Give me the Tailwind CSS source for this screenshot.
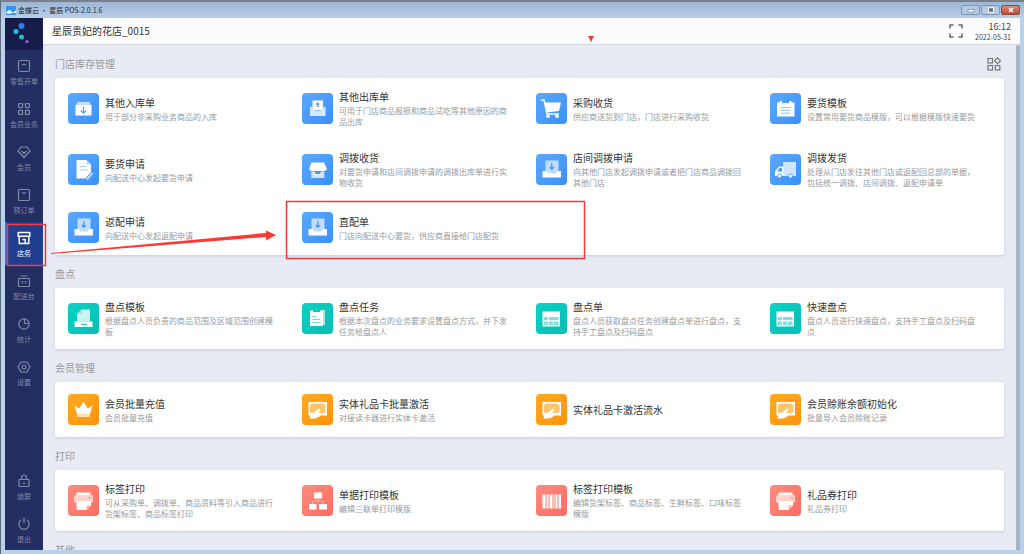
<!DOCTYPE html>
<html lang="zh-CN">
<head>
<meta charset="utf-8">
<title>金蝶云 · 星辰 POS</title>
<script src="https://cdn.jsdelivr.net/npm/@tailwindcss/browser@4"></script>
</head>
<body class="font-['Noto_Sans_CJK_SC','Noto_Sans',sans-serif]">
<svg class="hidden">
  <defs>
    <symbol id="boxdown" viewBox="0 0 31 31"><path fill="#c4deff" d="M9.500 9h12l1.500 3.500H8z"/><path fill="#fff" d="M7.500 12h16v10.500h-16z"/><path d="M15.500 14v6M12.800 17.500l2.700 2.700 2.700-2.700" fill="none" stroke="#4a9bff" stroke-width="1.100"/></symbol>
    <symbol id="envelope" viewBox="0 0 31 31"><path fill="#fff" d="M10.500 7.500h10.500V17H10.500z"/><path fill="#d6e8ff" d="M8 13.500l2.500 1 2.500 3h5.500l2.500-3 2.500-1V23H8z"/><path fill="#4a9bff" d="M15.800 9l2.200 2.500h-1.500V14H15v-2.500h-1.500z"/></symbol>
    <symbol id="cart" viewBox="0 0 31 31"><path d="M5 7h3l3 14h12" fill="none" stroke="#fff" stroke-width="1.400"/><path fill="#fff" d="M8.500 9.500H25l-2 8.500-12.500 1.500z"/><circle cx="12" cy="23.300" r="1.800" fill="#fff"/><circle cx="21" cy="23.300" r="1.800" fill="#fff"/></symbol>
    <symbol id="notepad" viewBox="0 0 31 31"><path fill="#fff" d="M7 9.500h2.500V8h2.500v2h7V8h2.500v1.500H24.500v14H7z"/><path d="M11 14.500h9.500M11 17.300h9.500M11 20.200h9.500" stroke="#8fc1ff"/></symbol>
    <symbol id="request" viewBox="0 0 31 31"><path fill="#fff" d="M8.500 6h10l4.500 4.500V18l-6 7-1.500-1-1.500 1-1.500-1-1.500 1-1.500-1-1 1z"/><path fill="#b9d8ff" d="M18.500 6l4.500 4.500h-4.500z"/><path d="M11.500 12.500h7M11.500 16h8.500" stroke="#a5cdff" stroke-width="1.100"/><path d="M24.500 19l-5.500 6.500" stroke="#cfe4ff" stroke-width="1.900"/></symbol>
    <symbol id="shop" viewBox="0 0 31 31"><path fill="#fff" d="M9.500 8.500h12.500l3 6.500-2 2h-14l-2-2z"/><path fill="#cfe4ff" d="M9.300 17.500h3v3h7v-3h3v6.500h-13z"/><path d="M12.500 18v2.500h6.500V18" fill="none" stroke="#fff"/></symbol>
    <symbol id="tray" viewBox="0 0 31 31"><path fill="#c2dcff" d="M9.500 6.500h13V20h-13z"/><path d="M15.800 9v6M13.800 13l2 2.300 2-2.300" fill="none" stroke="#3f93fb" stroke-width="1.200"/><path fill="#fff" d="M6.500 17h4l1.500 2.500h7.500l1.500-2.500h4v6.500h-18.500z"/></symbol>
    <symbol id="truck" viewBox="0 0 31 31"><path fill="#cfe4ff" d="M13 8h13v14H13z"/><path fill="#fff" d="M9 12.500h4.500V22H5v-4.500z"/><path fill="#4a9bff" d="M9.500 14h2.500v3.500H7.300z"/><circle cx="9.500" cy="22" r="2" fill="#fff" stroke="#4a9bff" stroke-width=".8"/><circle cx="20.500" cy="22" r="2" fill="#fff" stroke="#4a9bff" stroke-width=".8"/></symbol>
    <symbol id="register" viewBox="0 0 31 31"><path fill="#c9f4f0" d="M13.500 6.500H22v12H9v-7.500z"/><path fill="#8fe6df" d="M9 11l4.500-4.500V11z"/><path fill="#fff" d="M6.500 18.500h18V24h-18z"/><path d="M13 21.300h6" stroke="#0dc9be" stroke-width="1.100"/></symbol>
    <symbol id="clipboard" viewBox="0 0 31 31"><path fill="#a0ebe5" d="M19 7h4v15h-4z"/><path fill="#fff" d="M8 7.500h3V9h7V7.500h3V23H8z"/><path d="M10.500 13.500h4M10.500 16.500h8M10.500 19.500h8" stroke="#71ddd5"/></symbol>
    <symbol id="sheet" viewBox="0 0 31 31"><path fill="#fff" d="M6.500 8.500H24V23.500H6.500z"/><path fill="#7ee2db" d="M8 14h4v3.300H8zM13 14h9.500v3.300H13zM8 18.500h4V22H8zM13 18.500h4V22h-4zM18 18.500h4.500V22H18z"/></symbol>
    <symbol id="crown" viewBox="0 0 31 31"><path fill="#fff" d="M6.500 11.500l4.700 3 4.300-7 4.300 7 4.700-3-2.500 8.700H9z"/><path fill="#ffe1b0" d="M9 20.200h13V23H9z"/></symbol>
    <symbol id="giftcard" viewBox="0 0 31 31"><path fill="#fff" d="M6.500 8h18.500v13.500H6.500z"/><path fill="#ffc56b" d="M9.500 9.500h12l2 2v6l-2 2h-12l-1.500-2v-6z"/><path fill="#fff" d="M7.500 24.500l1-4.500 5-2.500 3.500-3 1.500 1-2 3.500h4l-3 3.500-4 2z"/></symbol>
    <symbol id="printer" viewBox="0 0 31 31"><path fill="#fff" d="M8.500 7.500h14v3h-14z"/><path fill="#ffd2cd" d="M8 10h15.500q1.500 0 1.500 1.500v6H6v-5.500q0-2 2-2z"/><path d="M20.500 12.800h2.500" stroke="#ff7c70"/><path fill="#fff" d="M8.500 16H23v4.500L18.500 25h-10z"/><path fill="#ffb0a8" d="M23 20.500L18.500 25v-4.500z"/></symbol>
    <symbol id="tree" viewBox="0 0 31 31"><path fill="#fff" d="M12 7.500h8v6h-8zM7 19h7.500v5.500H7zM17 19h8v5.500h-8z"/><path d="M16 13v3M10.500 19v-2.700h10.500V19" fill="none" stroke="#ffb8b0"/></symbol>
    <symbol id="barcode" viewBox="0 0 31 31"><path fill="#fff" d="M6.500 9.500h3v14h-3zM10.500 9.500h2v14h-2zM13.500 9.500h3v14h-3zM17.500 9.500h1v14h-1zM19.500 9.500h2v14h-2zM22.500 9.500h2.500v14h-2.500z"/></symbol>
  </defs>
</svg>

<div class="relative flex h-screen flex-col overflow-hidden border-t-2 border-l border-t-[#7b8088] border-l-[#5d6c7c] bg-[#b9d1ea]">
  <div class="flex h-4 shrink-0 items-center bg-linear-to-b from-[#9db7d6] to-[#b7cee9] pr-1 pl-[5px]">
    <svg class="mr-[2px] h-[9px] w-[10px]" viewBox="0 0 10 9"><rect width="10" height="9" fill="#2f94f5"/><path d="M0 7Q3 2 5 5T10 4V7Q6 6 4 8Z" fill="#fff"/></svg>
    <span class="flex-1 text-[7px] leading-none text-[#1c2733]">金蝶云 · 星辰 POS-2.0.1.6</span>
    <div class="flex gap-px">
      <button aria-label="最小化" class="flex h-[10px] w-[19px] items-center justify-center rounded-xs border border-[#7e95b2] bg-[#b4c9e2]"><svg class="h-[6px] w-2" viewBox="0 0 8 6"><rect x="1" y="2.500" width="6" height="2.500" fill="#fff" stroke="#6b7685" stroke-width=".6"/></svg></button>
      <button aria-label="最大化" class="flex h-[10px] w-[19px] items-center justify-center rounded-xs border border-[#7e95b2] bg-[#b4c9e2]"><svg class="h-[6px] w-2" viewBox="0 0 8 6"><rect x="1.500" y=".8" width="5" height="4.400" fill="#5f6b7a" stroke="#fff"/></svg></button>
      <button aria-label="关闭" class="flex h-[10px] w-[19px] items-center justify-center rounded-xs border border-[#8d4a42] bg-linear-to-b from-[#dd8d7c] to-[#bd4630]"><svg class="h-[6px] w-2" viewBox="0 0 8 6"><path d="M2 1l4 4M6 1L2 5" stroke="#fff" stroke-width="1.500"/></svg></button>
    </div>
  </div>

  <div class="flex min-h-0 flex-1 pr-1 pb-[4px] pl-1">
    <nav class="flex w-[38px] shrink-0 flex-col bg-[#232e63] text-[7px] leading-[10px] text-[#8389a5]">
      <div class="flex h-8 shrink-0 justify-center bg-[#161d48]">
        <svg class="h-8 w-[38px]" viewBox="0 0 38 32"><circle cx="16.500" cy="8" r="3" fill="#2d7ff0"/><circle cx="11" cy="13.500" r="2.500" fill="#12c4f2"/><circle cx="16.500" cy="19" r="2.500" fill="#1cc3b4"/><circle cx="22" cy="23.500" r="1.600" fill="#9a62e0"/></svg>
      </div>
      <a href="#" class="flex h-[43px] flex-col items-center gap-[3px] pt-[9px]"><svg class="size-[14px]" viewBox="0 0 14 14" fill="none" stroke="currentColor" stroke-width="1.200"><rect x="1.500" y="1.500" width="11" height="11" rx="1.500"/><path d="M5 5.500h4"/></svg>零售开单</a>
      <a href="#" class="flex h-[43px] flex-col items-center gap-[3px] pt-[9px]"><svg class="size-[14px]" viewBox="0 0 14 14" fill="none" stroke="currentColor" stroke-width="1.200"><rect x="1.600" y="1.600" width="4" height="4" rx=".5"/><rect x="8.400" y="1.600" width="4" height="4" rx=".5"/><rect x="1.600" y="8.400" width="4" height="4" rx=".5"/><rect x="8.400" y="8.400" width="4" height="4" rx=".5"/></svg>会员业务</a>
      <a href="#" class="flex h-[43px] flex-col items-center gap-[3px] pt-[9px]"><svg class="size-[14px]" viewBox="0 0 14 14" fill="none" stroke="currentColor" stroke-width="1.200" stroke-linejoin="round"><path d="M4 2h6l3 4-6 6.500L1 6zM4.500 6L7 8.500 9.500 6"/></svg>会员</a>
      <a href="#" class="flex h-[43px] flex-col items-center gap-[3px] pt-[9px]"><svg class="size-[14px]" viewBox="0 0 14 14" fill="none" stroke="currentColor" stroke-width="1.200"><rect x="1.500" y="1.500" width="11" height="11" rx="1"/><path d="M5 5h4"/></svg>预订单</a>
      <a href="#" aria-current="page" class="flex h-[43px] flex-col items-center gap-[3px] border-l-2 border-[#2a6df0] bg-[#20408f] pt-[9px] pr-[2px] text-white"><svg class="size-[14px]" viewBox="0 0 14 14" fill="none" stroke="currentColor" stroke-width="1.400" stroke-linejoin="round"><path d="M1.200 1.500h11.600v3.800H1.200zM2.200 5.500v7h9.600v-7M8.200 12.500V8.500H5.500"/></svg>店务</a>
      <a href="#" class="flex h-[43px] flex-col items-center gap-[3px] pt-[9px]"><svg class="size-[14px]" viewBox="0 0 14 14" fill="none" stroke="currentColor" stroke-width="1.200"><rect x="1.500" y="4.500" width="11" height="8" rx=".5"/><path d="M3.500 2h7M5.500 7v2.500M8.500 7v2.500"/></svg>配送台</a>
      <a href="#" class="flex h-[43px] flex-col items-center gap-[3px] pt-[9px]"><svg class="size-[14px]" viewBox="0 0 14 14" fill="none" stroke="currentColor" stroke-width="1.200"><circle cx="7" cy="7" r="5.200"/><path d="M7.500 2v4.500H12"/></svg>统计</a>
      <a href="#" class="flex h-[43px] flex-col items-center gap-[3px] pt-[9px]"><svg class="size-[14px]" viewBox="0 0 14 14" fill="none" stroke="currentColor" stroke-width="1.200" stroke-linejoin="round"><path d="M4 2h6l3 5-3 5H4L1 7z"/><circle cx="7" cy="7" r="2"/></svg>设置</a>
      <a href="#" class="mt-auto flex h-[43px] flex-col items-center gap-[3px] pt-[10px]"><svg class="size-[14px]" viewBox="0 0 14 14" fill="none" stroke="currentColor" stroke-width="1.200"><rect x="2" y="5.500" width="10" height="7" rx=".5"/><path d="M4.500 5.500V3.500a2.500 2.500 0 0 1 5 0v2M7 8v2.500"/></svg>锁屏</a>
      <a href="#" class="flex h-[43px] flex-col items-center gap-[3px] pt-[10px]"><svg class="size-[14px]" viewBox="0 0 14 14" fill="none" stroke="currentColor" stroke-width="1.200"><path d="M4 3a5.200 5.200 0 1 0 6 0M7 1v5"/></svg>退出</a>
    </nav>

    <div class="flex min-w-0 flex-1 flex-col bg-[#e8ebf4]">
      <header class="flex h-[27px] shrink-0 items-center border-b border-[#d5d8df] bg-[#fcfcfd] pr-[9px] pl-[9px]">
        <h1 class="flex-1 text-[10px] leading-none text-[#333]">星辰贵妃的花店_0015</h1>
        <button aria-label="全屏" class="mr-[12px] text-[#666]"><svg class="size-[14px]" viewBox="0 0 14 14" fill="none" stroke="currentColor" stroke-width="1.500"><path d="M1 4.500V1h3.500M9.500 1H13v3.500M13 9.500V13H9.500M4.500 13H1V9.500"/></svg></button>
        <div class="text-right text-[#444]"><div class="text-[9px] leading-[11px]">16:12</div><div class="text-[7px] leading-[10px]">2022-05-31</div></div>
      </header>

      <main class="flex min-h-0 flex-1 overflow-hidden">
        <div class="min-w-0 flex-1 pr-3 pl-3" id="sections"></div>
        <div class="w-1 shrink-0 rounded-t-sm bg-[#a9b4c3]"></div>
      </main>
    </div>
  </div>

  <svg class="pointer-events-none absolute -top-[2px] -left-px h-[300px] w-[620px]" viewBox="0 0 620 300" fill="none" stroke="#f23a3a" aria-hidden="true">
    <path d="M588 36h6l-3 6z" fill="#f23a3a" stroke="none"/>
    <rect x="7.500" y="224.500" width="38" height="41" stroke-width="1.500"/>
    <rect x="286.500" y="201.500" width="298" height="57" stroke-width="1.500"/>
    <path d="M51 253L266 233V230.500L276 235 266 240.500V237L51 254z" fill="#fb3a36" stroke="none"/>
  </svg>
</div>

<template id="section-tpl">
  <section>
    <div class="flex h-[33px] items-center justify-between pt-[4px] pr-[3px]"><h2 class="text-[10px] leading-none text-[#999]"></h2></div>
    <div class="grid grid-cols-4 rounded-xs bg-white pl-[13px] shadow-sm shadow-[#c9cfdf]"></div>
  </section>
</template>
<template id="card-tpl">
  <a href="#" class="flex items-center gap-[6px] py-3">
    <span class="size-[31px] shrink-0 rounded-[4px] bg-linear-to-br"><svg class="size-[31px]" viewBox="0 0 31 31"><use/></svg></span>
    <span class="flex w-[174px] flex-col gap-[2px]"><span class="text-[10px] leading-[13px] text-[#333]"></span><span class="text-[8px] leading-[11px] text-[#999]"></span></span>
  </a>
</template>
<template id="manage-tpl"><button aria-label="管理" class="text-[#777]"><svg class="size-[14px]" viewBox="0 0 14 14" fill="none" stroke="currentColor" stroke-width="1.200"><rect x="1" y="1.500" width="4.500" height="4.500"/><path d="M10.500.8l2.900 2.900-2.900 2.900-2.900-2.900z"/><rect x="1" y="8.500" width="4.500" height="4.500"/><rect x="8.300" y="8.500" width="4.500" height="4.500"/></svg></button></template>

<script>
const tones = {
  blue: ['from-[#5ba8ff]', 'to-[#3a90ff]'],
  teal: ['from-[#0bd2c6]', 'to-[#07bdb3]'],
  orange: ['from-[#ffa922]', 'to-[#ff930a]'],
  red: ['from-[#ff8b80]', 'to-[#ff6b5e]']
};
const sections = [
  ['门店库存管理', 'blue', [
    ['boxdown', '其他入库单', '用于部分非采购业务商品的入库'],
    ['envelope', '其他出库单', '可用于门店商品报损和商品试吃等其他原因的商品出库'],
    ['cart', '采购收货', '供应商送货到门店，门店进行采购收货'],
    ['notepad', '要货模板', '设置常用要货商品模版，可以根据模版快速要货'],
    ['request', '要货申请', '向配送中心发起要货申请'],
    ['shop', '调拨收货', '对要货申请和店间调拨申请的调拨出库单进行实物收货'],
    ['tray', '店间调拨申请', '向其他门店发起调拨申请或者把门店商品调拨回其他门店'],
    ['truck', '调拨发货', '处理从门店发往其他门店或返配回总部的单据，包括统一调拨、店间调拨、返配申请单'],
    ['tray', '返配申请', '向配送中心发起返配申请'],
    ['tray', '直配单', '门店向配送中心要货，供应商直接给门店配货']]],
  ['盘点', 'teal', [
    ['register', '盘点模板', '根据盘点人员负责的商品范围及区域范围创建模板'],
    ['clipboard', '盘点任务', '根据本次盘点的业务要求设置盘点方式，并下发任务给盘点人'],
    ['sheet', '盘点单', '盘点人员获取盘点任务创建盘点单进行盘点，支持手工盘点及扫码盘点'],
    ['sheet', '快速盘点', '盘点人员进行快速盘点，支持手工盘点及扫码盘点']]],
  ['会员管理', 'orange', [
    ['crown', '会员批量充值', '会员批量充值'],
    ['giftcard', '实体礼品卡批量激活', '对接读卡器进行实体卡激活'],
    ['giftcard', '实体礼品卡激活流水', ''],
    ['giftcard', '会员赊账余额初始化', '批量导入会员赊账记录']]],
  ['打印', 'red', [
    ['printer', '标签打印', '可从采购单、调拨单、商品资料等引入商品进行货架标签、商品标签打印'],
    ['tree', '单据打印模板', '编辑三联单打印模版'],
    ['barcode', '标签打印模板', '编辑货架标签、商品标签、生鲜标签、口味标签模版'],
    ['printer', '礼品券打印', '礼品券打印']]],
  ['其他', 'blue', []]
];
const clone = id => document.getElementById(id).content.firstElementChild.cloneNode(true);
const root = document.getElementById('sections');
sections.forEach(([name, tone, cards], i) => {
  const s = clone('section-tpl');
  const [head, grid] = s.children;
  head.firstElementChild.textContent = name;
  if (i === 0) head.append(clone('manage-tpl'));
  cards.forEach(([icon, title, desc]) => {
    const c = clone('card-tpl');
    const [tile, text] = c.children;
    tile.classList.add(...tones[tone]);
    tile.querySelector('use').setAttribute('href', '#' + icon);
    text.children[0].textContent = title;
    if (desc) text.children[1].textContent = desc;
    else text.children[1].remove();
    grid.append(c);
  });
  root.append(s);
});
</script>
</body>
</html>
